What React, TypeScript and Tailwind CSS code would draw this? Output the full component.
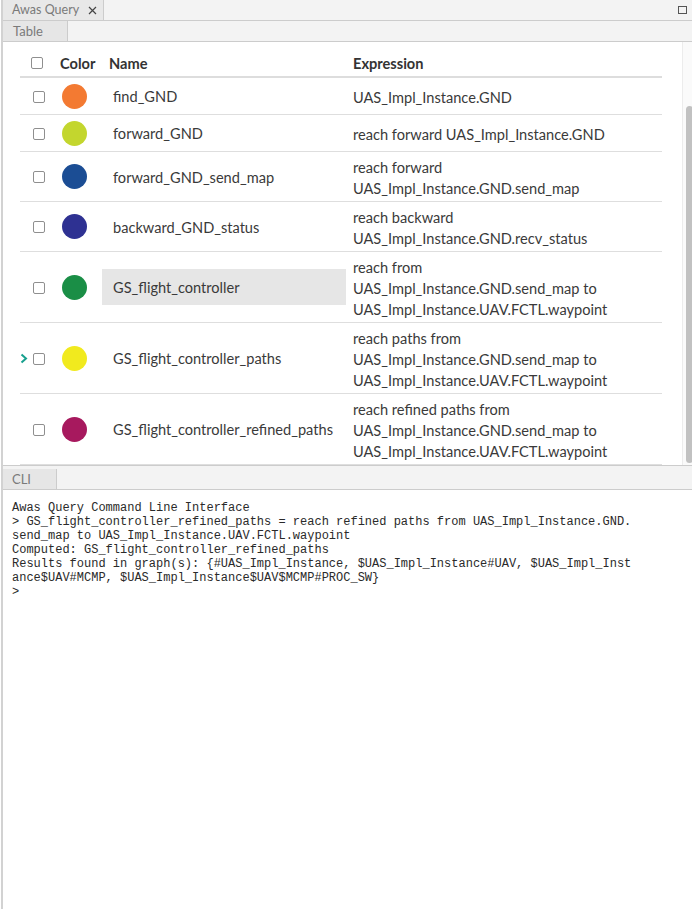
import React from "react";

const rows = [
  { name: "find_GND", color: "#f37a32", expr: ["UAS_Impl_Instance.GND"] },
  { name: "forward_GND", color: "#c3d62e", expr: ["reach forward UAS_Impl_Instance.GND"] },
  { name: "forward_GND_send_map", color: "#1b4d94", expr: ["reach forward", "UAS_Impl_Instance.GND.send_map"] },
  { name: "backward_GND_status", color: "#2e3192", expr: ["reach backward", "UAS_Impl_Instance.GND.recv_status"] },
  {
    name: "GS_flight_controller",
    color: "#1a8e46",
    expr: ["reach from", "UAS_Impl_Instance.GND.send_map to", "UAS_Impl_Instance.UAV.FCTL.waypoint"],
    hover: true,
  },
  {
    name: "GS_flight_controller_paths",
    color: "#f1ea1e",
    expr: ["reach paths from", "UAS_Impl_Instance.GND.send_map to", "UAS_Impl_Instance.UAV.FCTL.waypoint"],
    current: true,
  },
  {
    name: "GS_flight_controller_refined_paths",
    color: "#a7195e",
    expr: ["reach refined paths from", "UAS_Impl_Instance.GND.send_map to", "UAS_Impl_Instance.UAV.FCTL.waypoint"],
  },
];

const cliLines = [
  "Awas Query Command Line Interface",
  "> GS_flight_controller_refined_paths = reach refined paths from UAS_Impl_Instance.GND.",
  "send_map to UAS_Impl_Instance.UAV.FCTL.waypoint",
  "Computed: GS_flight_controller_refined_paths",
  "Results found in graph(s): {#UAS_Impl_Instance, $UAS_Impl_Instance#UAV, $UAS_Impl_Inst",
  "ance$UAV#MCMP, $UAS_Impl_Instance$UAV$MCMP#PROC_SW}",
  ">",
];

function Checkbox() {
  return <div className="w-[12px] h-[12px] rounded-[2px] border border-[#8f8f8f] bg-white" />;
}

export default function App() {
  return (
    <div
      className="w-[692px] h-[909px] flex flex-col bg-white ml-px border-l-2 border-[#d2d2d2] overflow-hidden"
      style={{ fontFamily: "Lato, 'Open Sans', sans-serif" }}
    >
      {/* Window tab bar */}
      <div className="flex items-end h-[21px] bg-[#f3f3f3] border-b border-[#cccccc]">
        <div className="h-[20px] w-[101px] flex items-center gap-[9px] pl-[9px] bg-[#e8e8e8] border-r border-[#cccccc] text-[12.5px] text-[#7a7a7a]">
          <span>Awas Query</span>
          <svg width="9" height="9" viewBox="0 0 9 9">
            <path d="M1 1 L8 8 M8 1 L1 8" stroke="#444" strokeWidth="1.2" />
          </svg>
        </div>
        <div className="flex-1" />
        <div className="w-[9px] h-[8px] border border-[#555] mr-[6px] mb-[6px]" />
      </div>

      {/* Table tab bar */}
      <div className="flex items-end h-[21px] bg-[#f3f3f3] border-b border-[#cccccc]">
        <div className="h-[20px] w-[65px] flex items-center pl-[10px] pt-px bg-[#e6e6e6] border-r border-[#cccccc] text-[13px] text-[#7a7a7a]">
          Table
        </div>
      </div>

      {/* Table panel */}
      <div className="flex h-[423px]">
        <div className="flex-1 pt-[8px]">
          <div className="ml-[17px] w-[642px] text-[14.6px] text-[#3a3a3a]">
            <div className="grid grid-cols-[36px_46px_244px_316px] h-[28px] items-center border-b-2 border-[#dddddd] font-bold text-[#333]">
              <div className="pl-[11px]">
                <Checkbox />
              </div>
              <div className="pl-[4px] pt-[2px]">Color</div>
              <div className="pl-[7px] pt-[2px]">Name</div>
              <div className="pl-[7px] pt-[2px]">Expression</div>
            </div>
            {rows.map((r) => (
              <div
                key={r.name}
                className="grid grid-cols-[36px_46px_244px_316px] items-center border-b border-[#dedede]"
              >
                <div className="flex items-center pt-px">
                  <div className="w-[13px] flex justify-start">
                    {r.current && (
                      <svg width="8" height="11" viewBox="0 0 8 11">
                        <path d="M1.5 1.5 L6 5.5 L1.5 9.5" fill="none" stroke="#17a08e" strokeWidth="2" />
                      </svg>
                    )}
                  </div>
                  <Checkbox />
                </div>
                <div className="pl-[6px] flex items-center">
                  <div className="w-[25px] h-[25px] rounded-full" style={{ backgroundColor: r.color }} />
                </div>
                <div className={`h-[36px] flex items-center pl-[11px] pt-[2px] ${r.hover ? "bg-[#e6e6e6]" : ""}`}>
                  {r.name}
                </div>
                <div className="pl-[7px] pt-[5px] pb-[2px] leading-[21px] min-h-[36px] flex flex-col justify-center">
                  {r.expr.map((e) => (
                    <div key={e}>{e}</div>
                  ))}
                </div>
              </div>
            ))}
          </div>
        </div>
        <div className="w-[11px] border-l border-[#ececec] bg-[#fafafa] pt-[64px] pb-[2px] flex justify-end">
          <div className="w-[7px] h-[357px] rounded-full bg-[#c1c1c1]" />
        </div>
      </div>

      {/* CLI bar */}
      <div className="flex items-end h-[25px] bg-[#f3f3f3] border-t border-b border-[#cccccc]">
        <div className="h-[20px] w-[54px] flex items-center pl-[9px] pt-px bg-[#e6e6e6] border-r border-[#cccccc] text-[13px] text-[#7a7a7a]">
          CLI
        </div>
      </div>

      <div
        className="flex-1 pt-[11px] pl-[9px] text-[12px] leading-[14px] text-[#2a2a2a] whitespace-pre"
        style={{ fontFamily: "'Liberation Mono', 'Courier New', monospace" }}
      >
        {cliLines.map((l, i) => (
          <div key={i}>{l}</div>
        ))}
      </div>
    </div>
  );
}
